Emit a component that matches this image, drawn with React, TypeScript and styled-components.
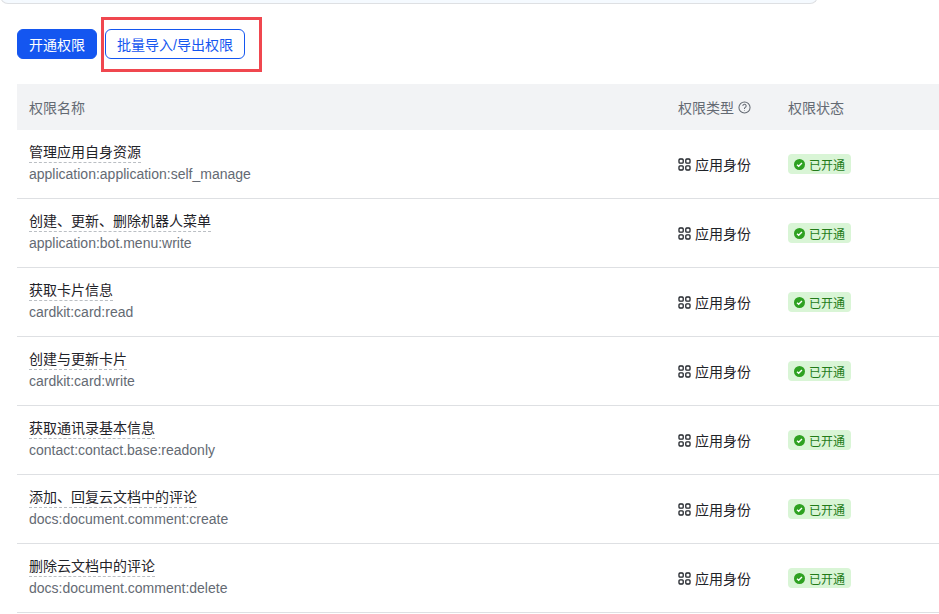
import React from 'react';
import styled, { createGlobalStyle } from 'styled-components';

const Global = createGlobalStyle`
  body { margin: 0; background: #fff; font-family: "Liberation Sans", "Noto Sans CJK SC", sans-serif; overflow: hidden; }
`;

const Page = styled.div`
  width: 939px; height: 614px; overflow: hidden;
`;
const TopCard = styled.div`
  margin-top: -20px; width: 816px; height: 23px;
  border: 1px solid #dee0e3; border-top: none; border-radius: 0 0 8px 8px;
  background: #f5faff;
`;
const Toolbar = styled.div`
  display: flex; gap: 8px; padding: 25px 0 0 17px; height: 30px; align-items: center;
`;
const Button = styled.button<{ $primary?: boolean }>`
  height: 30px; padding: 0 11px; border-radius: 6px; font-size: 14px; font-family: inherit;
  border: 1px solid #1456f0;
  background: ${p => (p.$primary ? '#1456f0' : '#fff')};
  color: ${p => (p.$primary ? '#fff' : '#1456f0')};
  cursor: pointer;
`;
const Highlight = styled.div`
  position: relative;
  &::after {
    content: ''; position: absolute; left: -4px; top: -12px; right: -17px; bottom: -13px;
    border: 3px solid #f0474f;
  }
`;
const Table = styled.div`
  margin: 25px 0 0 17px; width: 940px;
`;
const Grid = styled.div<{ $head?: boolean }>`
  display: grid; grid-template-columns: 649px 110px 1fr; align-items: center;
  height: ${p => (p.$head ? '46px' : '68px')};
  background: ${p => (p.$head ? '#f2f3f5' : '#fff')};
  border-bottom: ${p => (p.$head ? 'none' : '1px solid #dee0e3')};
  font-size: 14px;
  color: ${p => (p.$head ? '#646a73' : '#1f2329')};
  padding-left: 12px;
`;
const HeadCell = styled.div`
  display: flex; align-items: center; gap: 4px;
`;
const Name = styled.div`
  display: flex; flex-direction: column; gap: 1px; margin-top: -2px;
`;
const Title = styled.span`
  align-self: flex-start; color: #1f2329; line-height: 20px;
  border-bottom: 1px dashed #bbbfc4;
`;
const Scope = styled.span`
  color: #646a73; line-height: 20px;
`;
const Type = styled.div`
  display: flex; align-items: center; gap: 4px; color: #1f2329;
`;
const Tag = styled.span`
  display: inline-flex; align-items: center; gap: 4px; height: 20px; padding: 0 6px;
  background: #d9f5d6; color: #237b19; border-radius: 4px; font-size: 12px;
  justify-self: start;
`;

const AppIcon = () => (
  <svg width="13" height="13" viewBox="0 0 13 13" fill="none" stroke="#1f2329" strokeWidth="1.3">
    <rect x="1" y="1" width="4.2" height="4.2" rx="1" />
    <rect x="7.8" y="1" width="4.2" height="4.2" rx="1" />
    <rect x="1" y="7.8" width="4.2" height="4.2" rx="1" />
    <rect x="7.8" y="7.8" width="4.2" height="4.2" rx="1" />
  </svg>
);
const Check = () => (
  <svg width="11" height="11" viewBox="0 0 12 12">
    <circle cx="6" cy="6" r="6" fill="#2ea121" />
    <path d="M3.3 6.2l1.8 1.8 3.6-3.7" stroke="#fff" strokeWidth="1.5" fill="none" />
  </svg>
);
const Help = () => (
  <svg width="13" height="13" viewBox="0 0 14 14" fill="none" stroke="#646a73" strokeWidth="1.1">
    <circle cx="7" cy="7" r="6" />
    <path d="M5.2 5.4a1.8 1.8 0 1 1 2.4 1.7c-.4.2-.6.5-.6.9v.5" />
    <circle cx="7" cy="10.2" r=".5" fill="#646a73" stroke="none" />
  </svg>
);

const rows = [
  ['管理应用自身资源', 'application:application:self_manage'],
  ['创建、更新、删除机器人菜单', 'application:bot.menu:write'],
  ['获取卡片信息', 'cardkit:card:read'],
  ['创建与更新卡片', 'cardkit:card:write'],
  ['获取通讯录基本信息', 'contact:contact.base:readonly'],
  ['添加、回复云文档中的评论', 'docs:document.comment:create'],
  ['删除云文档中的评论', 'docs:document.comment:delete'],
];

export default function App() {
  return (
    <Page>
      <Global />
      <TopCard />
      <Toolbar>
        <Button $primary>开通权限</Button>
        <Highlight>
          <Button>批量导入/导出权限</Button>
        </Highlight>
      </Toolbar>
      <Table>
        <Grid $head>
          <HeadCell>权限名称</HeadCell>
          <HeadCell>权限类型 <Help /></HeadCell>
          <HeadCell>权限状态</HeadCell>
        </Grid>
        {rows.map(([t, s]) => (
          <Grid key={s}>
            <Name>
              <Title>{t}</Title>
              <Scope>{s}</Scope>
            </Name>
            <Type><AppIcon />应用身份</Type>
            <Tag><Check />已开通</Tag>
          </Grid>
        ))}
      </Table>
    </Page>
  );
}
